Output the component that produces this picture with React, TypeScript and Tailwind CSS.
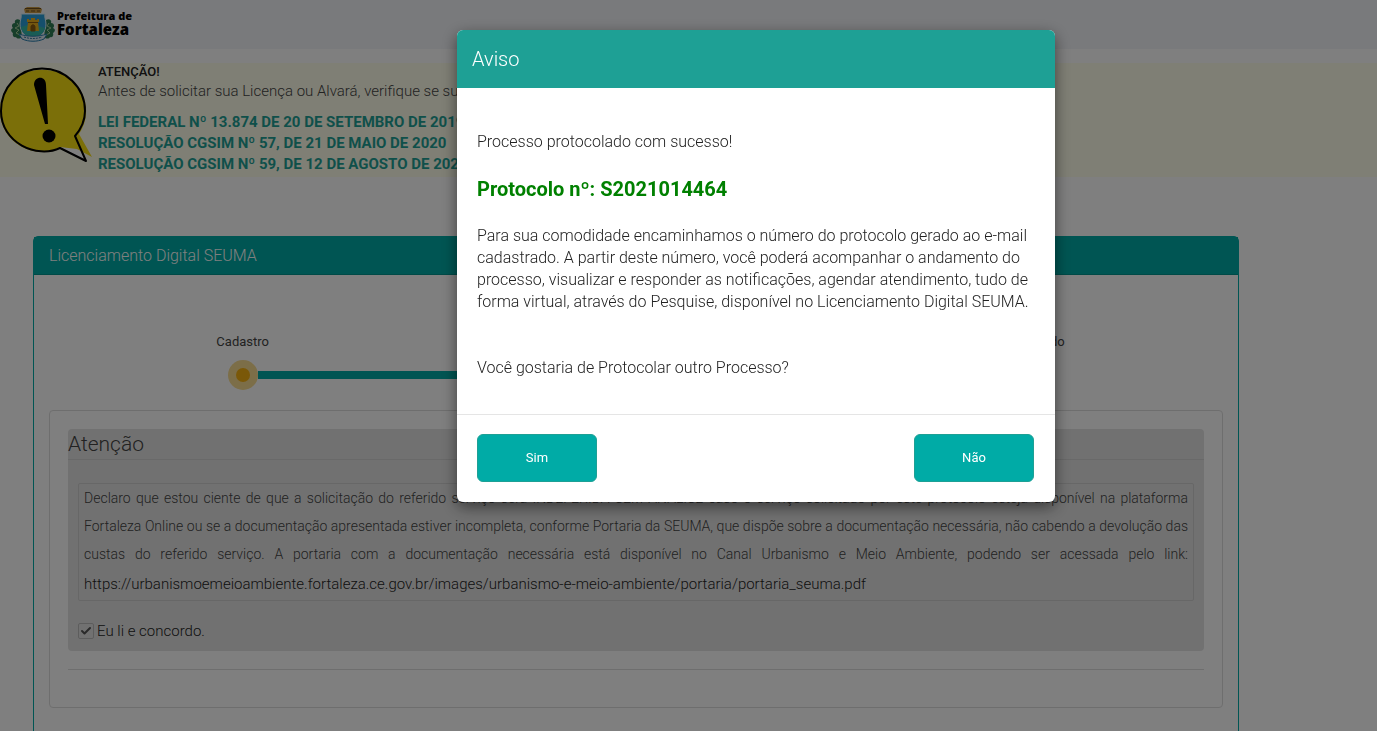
import { useState } from "react";
import { Check } from "lucide-react";

const laws = [
  "LEI FEDERAL Nº 13.874 DE 20 DE SETEMBRO DE 2019",
  "RESOLUÇÃO CGSIM Nº 57, DE 21 DE MAIO DE 2020",
  "RESOLUÇÃO CGSIM Nº 59, DE 12 DE AGOSTO DE 2020",
];

const steps = ["Cadastro", "Documentos", "Protocolado"];

function CityLogo() {
  return (
    <svg className="w-11 h-9" viewBox="0 0 44 36" aria-hidden="true">
      {/* wreath */}
      <path d="M9 14c-3-2-6 0-5 3-3 0-4 3-2 5-3 1-2 4 0 5-1 3 1 5 3 4 1 2 4 2 6 0L9 14z" fill="#2f7d55" />
      <path d="M35 14c3-2 6 0 5 3 3 0 4 3 2 5 3 1 2 4 0 5 1 3-1 5-3 4-1 2-4 2-6 0l2-17z" fill="#2f7d55" />
      <path d="M6 17l2 3-4 2 4 2-3 3 4 2M38 17l-2 3 4 2-4 2 3 3-4 2" stroke="#a9cf9c" fill="none" />
      {/* crown */}
      <path d="M13 3l3-2h12l3 2-1 4H14z" fill="#c99a45" />
      <path d="M14 2.500h16M15 5h3m2 0h4m2 0h3" stroke="#6e4f1f" />
      {/* shield */}
      <path d="M10 8h24c-1 3 1 6 1 10 0 8-5 13-13 15C14 31 9 26 9 18c0-4 2-7 1-10z" fill="#2b9fd9" stroke="#d9eef5" />
      <path d="M10 21l7-2 10 1 7 2c-1 5-5 8-12 10-7-2-11-5-12-11z" fill="#35b9aa" />
      <path d="M16 25l1-9h-1v-3h2v1h2v-2h4v2h2v-1h2v3h-1l1 9z" fill="#eab11f" />
      <path d="M20 25v-4c0-3 4-3 4 0v4zM17 16.500h10" fill="#8c5c10" stroke="#8c5c10" />
      {/* ribbon */}
      <path d="M8 28c9 3 19 3 28 0l-3 5c-7 3-15 3-22 0z" fill="#dce9f2" stroke="#2b7fae" />
      <path d="M13 31c6 2 12 2 18 0" stroke="#3577a0" strokeDasharray="2 1" fill="none" />
    </svg>
  );
}

function WarningBalloon() {
  return (
    <svg className="mt-1 size-24 shrink-0" viewBox="0 0 96 96" aria-hidden="true">
      <path d="M58 80l16-10 11 24z" fill="#fff" />
      <path d="M46 3a41 41 0 0 1 33 64l13 23-15-8-17-2A41 41 0 1 1 46 3z" fill="#f7de12" />
      <path
        d="M42 1.500C65 1.500 85 20 85 44c0 9-4 18-10 25l11 25-26-13C37 92 1 76 1 44 1 20 19 1.500 42 1.500z"
        fill="none"
        stroke="#000"
        strokeWidth="2"
        strokeLinejoin="round"
      />
      <path d="M34 18c0-9 12-10 12 0l2 39h-3z" fill="#000" />
      <circle cx="49" cy="69" r="6.500" fill="#000" />
    </svg>
  );
}

function Modal({ onClose }: { onClose: () => void }) {
  return (
    <div className="fixed inset-x-0 top-0 bottom-0.5 bg-black/50 flex justify-center items-start pt-[30px] pl-[135px]">
      <div
        role="dialog"
        aria-modal="true"
        aria-labelledby="modal-title"
        className="w-[598px] bg-white rounded-md overflow-hidden shadow-[0_5px_15px_rgba(0,0,0,0.5)]"
      >
        <div className="bg-[#1ea095] text-white h-[58px] px-[15px] flex items-center">
          <h4 id="modal-title" className="text-xl font-light">Aviso</h4>
        </div>
        <div className="px-5 pt-[43px] pb-[35px] text-base leading-[22px] text-[#222]">
          <p>Processo protocolado com sucesso!</p>
          <p className="mt-[25px] text-xl leading-[22px] font-bold text-[#008000]">
            Protocolo nº: S2021014464
          </p>
          <p className="mt-[25px]">
            Para sua comodidade encaminhamos o número do protocolo gerado ao e-mail
            cadastrado. A partir deste número, você poderá acompanhar o andamento do
            processo, visualizar e responder as notificações, agendar atendimento, tudo de
            forma virtual, através do Pesquise, disponível no Licenciamento Digital SEUMA.
          </p>
          <p className="mt-11">Você gostaria de Protocolar outro Processo?</p>
        </div>
        <div className="border-t border-[#e5e5e5] flex justify-between pl-5 pr-[21px] pt-[19px] pb-5">
          {["Sim", "Não"].map((label) => (
            <button
              key={label}
              onClick={onClose}
              className="w-[120px] h-12 rounded-md border border-[#1ea095] bg-[#00aba6] text-white text-[13px] font-normal"
            >
              {label}
            </button>
          ))}
        </div>
      </div>
    </div>
  );
}

export default function App() {
  const [open, setOpen] = useState(true);
  const [agreed, setAgreed] = useState(true);

  return (
    <div className="h-[calc(100vh-2px)] overflow-hidden bg-white font-['Roboto',sans-serif] font-light text-[#444]">
      {/* Navbar */}
      <header className="h-[49px] bg-[#f3f5f9] pl-[11px] pt-1.5 flex gap-0.5">
        <CityLogo />
        <div className="font-['Open_Sans',sans-serif] font-extrabold text-black pt-1">
          <div className="text-[11px] leading-3">Prefeitura de</div>
          <div className="text-[15px] leading-[15px]">Fortaleza</div>
        </div>
      </header>

      {/* Warning banner */}
      <section className="mt-3.5 h-[114px] bg-[#fefeeb] flex gap-0.5">
        <WarningBalloon />
        <div>
          <p className="text-[13px] leading-[18px] font-medium text-[#222]">ATENÇÃO!</p>
          <p className="text-[15px] leading-5">
            Antes de solicitar sua Licença ou Alvará, verifique se sua atividade é dispensada.
          </p>
          <ul className="mt-[11px] text-[15px] leading-[21px] font-bold text-[#1ea095]">
            {laws.map((law) => (
              <li key={law}>
                <a href="#">{law}</a>
              </li>
            ))}
          </ul>
        </div>
      </section>

      {/* Panel */}
      <main className="mt-[59px] ml-[33px] mr-[138px] h-[560px] rounded-t-[5px] border border-[#00aba6]">
        <h1 className="h-[38px] bg-[#00aba6] border-b border-[#00958f] text-white text-base flex items-center px-[15px]">
          Licenciamento Digital SEUMA
        </h1>

        <ol className="mt-[57px] mx-3 flex justify-between">
          {steps.map((step, i) => (
            <li key={step} className="flex-1 flex flex-col items-center text-[13px] font-normal">
              <span className="leading-5">{step}</span>
              <div className="mt-2 w-full flex items-center">
                <span className={i === 0 ? "flex-1" : "flex-1 h-2 bg-[#00aba6]"} />
                <span className="size-[30px] rounded-full bg-[#f8dc90] flex items-center justify-center">
                  <span className="size-3.5 rounded-full bg-[#f5b010]" />
                </span>
                <span className={i === steps.length - 1 ? "flex-1" : "flex-1 h-2 bg-[#00aba6]"} />
              </div>
            </li>
          ))}
        </ol>

        <div className="mt-5 mx-[15px] px-[18px] pt-[18px] pb-[37px] rounded border border-[#ddd]">
          <div className="bg-[#e3e3e3] rounded h-[222px]">
            <h2 className="text-[21px] leading-[30px] border-b border-[#d2d2d2]">Atenção</h2>
            <div className="mx-2.5 mt-[23px] px-[5px] border border-[#cfcfcf] rounded-xs text-sm leading-7">
              <p className="text-justify">
                Declaro que estou ciente de que a solicitação do referido serviço será
                INDEFERIDA SEM ANÁLISE caso o serviço solicitado por este protocolo esteja
                disponível na plataforma Fortaleza Online ou se a documentação apresentada
                estiver incompleta, conforme Portaria da SEUMA, que dispõe sobre a documentação
                necessária, não cabendo a devolução das custas do referido serviço. A portaria
                com a documentação necessária está disponível no Canal Urbanismo e Meio
                Ambiente, podendo ser acessada pelo link:{" "}
                <a href="#" className="text-[15px] leading-8 text-[#222]">
                  https://urbanismoemeioambiente.fortaleza.ce.gov.br/images/urbanismo-e-meio-ambiente/portaria/portaria_seuma.pdf
                </a>
              </p>
            </div>
            <label className="mt-5 ml-2.5 flex items-center gap-[3px] text-[15px] leading-5 text-[#222]">
              <span className="relative size-4">
                <input
                  type="checkbox"
                  checked={agreed}
                  onChange={(e) => setAgreed(e.target.checked)}
                  className="block size-4 appearance-none border border-[#bbb] rounded-xs"
                />
                {agreed && (
                  <Check className="absolute inset-0.5 size-3 pointer-events-none text-[#555]" strokeWidth={4} />
                )}
              </span>
              Eu li e concordo.
            </label>
          </div>
          <hr className="mt-[18px] border-[#ddd]" />
        </div>
      </main>

      {open && <Modal onClose={() => setOpen(false)} />}
    </div>
  );
}
